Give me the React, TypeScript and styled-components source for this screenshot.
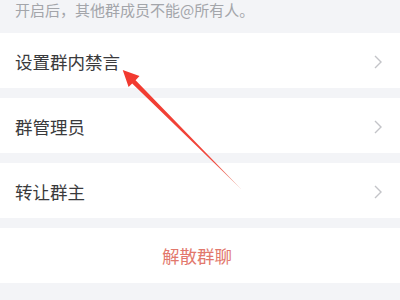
import React from "react";
import styled, { createGlobalStyle } from "styled-components";

const Global = createGlobalStyle`
  html, body { margin: 0; padding: 0; background: #f3f4f7; }
  body { font-family: "Noto Sans CJK SC", "Noto Sans", sans-serif; }
`;

const Page = styled.div`
  position: relative;
  width: 400px;
  height: 300px;
  overflow: hidden;
  background: #f3f4f7;
  display: flex;
  flex-direction: column;
`;

const Caption = styled.div`
  height: 33px;
  box-sizing: border-box;
  padding: 0 15px;
  display: flex;
  align-items: flex-start;
  font-size: 15px;
  line-height: 20px;
  color: #a3a5aa;
  margin-top: 0;
`;

const CaptionText = styled.span`
  position: relative;
  top: 0;
`;

const List = styled.div`
  display: flex;
  flex-direction: column;
  gap: 10px;
`;

const Row = styled.div<{ $center?: boolean }>`
  height: 55px;
  background: #ffffff;
  display: flex;
  align-items: center;
  justify-content: ${(p) => (p.$center ? "center" : "space-between")};
  padding: ${(p) => (p.$center ? "0 6px 0 0" : "2px 16px 0 15px")};
  box-sizing: border-box;
`;

const Label = styled.span<{ $danger?: boolean }>`
  font-size: 17.5px;
  line-height: 24px;
  color: ${(p) => (p.$danger ? "#e2786c" : "#3a3a3c")};
`;

const Chevron = () => (
  <svg width="12" height="16" viewBox="0 0 12 16">
    <path d="M3 2 L9 8 L3 14" fill="none" stroke="#c3c4c8" strokeWidth="1.4" />
  </svg>
);

const Overlay = styled.svg`
  position: absolute;
  left: 0;
  top: 0;
  pointer-events: none;
`;

export default function App() {
  return (
    <>
      <Global />
      <Page>
        <Caption>
          <CaptionText>开启后，其他群成员不能@所有人。</CaptionText>
        </Caption>
        <List>
          <Row>
            <Label>设置群内禁言</Label>
            <Chevron />
          </Row>
          <Row>
            <Label>群管理员</Label>
            <Chevron />
          </Row>
          <Row>
            <Label>转让群主</Label>
            <Chevron />
          </Row>
          <Row $center>
            <Label $danger>解散群聊</Label>
          </Row>
        </List>
        <Overlay width="400" height="300" viewBox="0 0 400 300">
          <defs>
            <linearGradient id="ag" x1="122" y1="70" x2="242" y2="190" gradientUnits="userSpaceOnUse">
              <stop offset="0" stopColor="#f2392f" />
              <stop offset="0.75" stopColor="#f0473c" />
              <stop offset="1" stopColor="#e8a08e" />
            </linearGradient>
          </defs>
          <polygon
            points="122.7,70 139.5,76 135.6,80.2 242,190 132.2,83.4 128.6,87"
            fill="url(#ag)"
          />
        </Overlay>
      </Page>
    </>
  );
}
